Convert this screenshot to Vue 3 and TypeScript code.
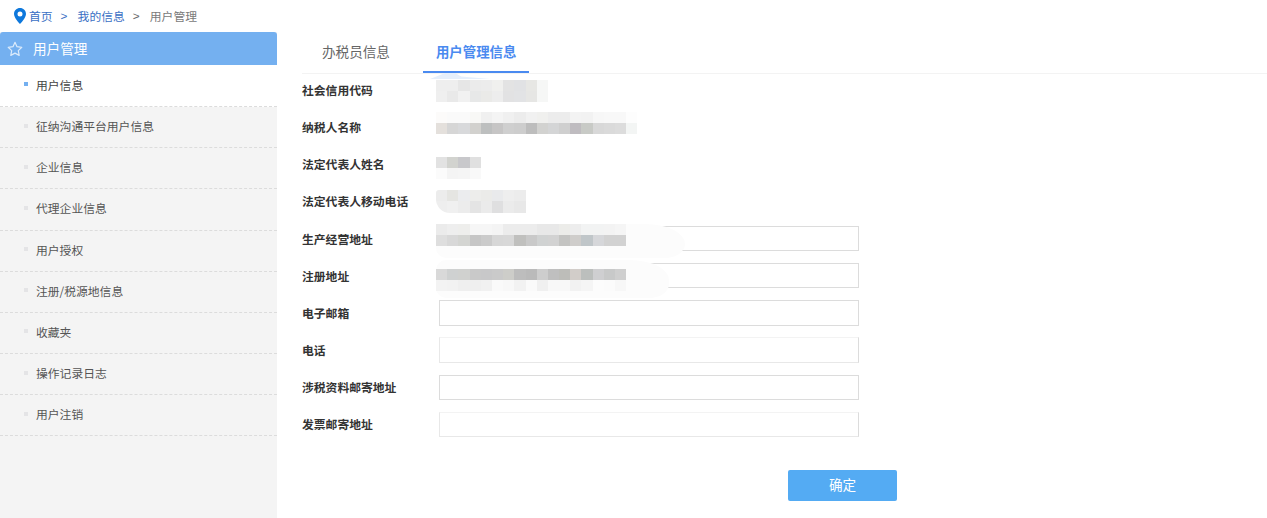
<script setup lang="ts">
interface Mosaic {
  top: number
  width: number
  height: number
  rows: string[][]
  rounded?: boolean
}
interface Field {
  label: string
  input: boolean
  soft?: boolean
  haze?: { top: number; width: number; height: number }
  mosaic?: Mosaic
}

const menu: string[] = [
  '用户信息',
  '征纳沟通平台用户信息',
  '企业信息',
  '代理企业信息',
  '用户授权',
  '注册/税源地信息',
  '收藏夹',
  '操作记录日志',
  '用户注销',
]

const g = (s: string): string[] => s.split(' ').map((c) => '#' + c)

const fields: Field[] = [
  {
    label: '社会信用代码',
    input: false,
    mosaic: {
      top: 2.5,
      width: 11.2,
      height: 11,
      rows: [
        g('eeeeee eeeeee e6e6e6 ebebeb ececec f0f0ee e3e3e3 e1e2e4 e7e7e4 f6f7f6'),
        g('efefef e9e9e9 f1f1f1 e7e8e8 eaeae8 ededed e2e2e3 e2e3e5 e6e6e4 f6f7f6'),
      ],
    },
  },
  {
    label: '纳税人名称',
    input: false,
    mosaic: {
      top: -2.2,
      width: 11.2,
      height: 11,
      rows: [
        g('fcfbfa fafafa fafafa f8f8f6 f0f0f0 f4f4f4 f0f0f0 ececec f1f1f1 f0f0ee ececec ececec f3f3f3 f2f2f2 f7f7f7 f8f8f8 f8f8f8 fdfdfd'),
        g('e4e0dc d6d6d6 d8d9db d2d1ce bdbfbf c6c5c5 cfcfcf cdcdcd bdbdbd d2d2d0 d4d5d6 cfcfcf bfbcc0 c8cac6 d8d8d8 dadada dcdcdc f3f5f4'),
      ],
    },
  },
  {
    label: '法定代表人姓名',
    input: false,
    mosaic: {
      top: 5.6,
      width: 11.2,
      height: 11,
      rows: [
        g('e2e2e2 d2d3cf c8c8cb e0e0e0'),
        g('fbfbfb f4f4f4 f5f5f5 f9f9f9'),
      ],
    },
  },
  {
    label: '法定代表人移动电话',
    input: false,
    mosaic: {
      top: 1.4,
      width: 11.2,
      height: 11.5,
      rounded: true,
      rows: [
        g('ececec e5e5e2 ebecee ededeb ebebe9 e9eaec eeeeee ececec'),
        g('eeeeee f0f0f0 ececec e4e4e4 ebebeb dfdfe0 ebebeb e8e8e8'),
      ],
    },
  },
  {
    label: '生产经营地址',
    input: true,
    haze: { top: -2, width: 249, height: 34 },
    mosaic: {
      top: -1.8,
      width: 11.2,
      height: 11,
      rows: [
        g('ebebeb eeeeee eeeeec f6f6f6 f6f6f6 f4f4f4 ececec ececec ececec e8e8e8 e8e8e8 ecece9 ededed f2f3f3 f2f3f3 f3f3f3 f5f5f5'),
        g('dedede d8d8d8 d4d5d2 c6c6c6 cbcbcb d7d7d7 d8d8d8 c0c0be c9c9c9 d0d2d2 d2d2d2 c4c4c2 cfcdcb c0c6c9 d6d7da d2d2d2 d2d2d2'),
      ],
    },
  },
  {
    label: '注册地址',
    input: true,
    haze: { top: -3, width: 233, height: 38 },
    mosaic: {
      top: 6,
      width: 11.2,
      height: 11,
      rows: [
        g('d9d9d9 cfd1d1 d0d1cf c9c9c9 c8c8c9 cacaca cdcdc9 bdbdbd bababa cdcdcd bfbfbf bdbdb9 d2cdc9 bcbfbd cfcfd1 c8c9c9 cfcfcf'),
        g('f3f3f3 f2f2f2 efefef efefef f1f1f1 fafafa f8f8f8 f2f2f2 fafafa f0f0f0 f8f8f8 f8f8f8 f2f2f2 f5f5f5 fcfcfc fbfbfb f7f7f7'),
      ],
    },
  },
  { label: '电子邮箱', input: true },
  { label: '电话', input: true, soft: true },
  { label: '涉税资料邮寄地址', input: true },
  { label: '发票邮寄地址', input: true, soft: true },
]
</script>

<template>
  <div class="page">
    <nav class="crumbs">
      <svg class="pin" viewBox="0 0 12 16" width="12" height="16" aria-hidden="true">
        <path
          fill="#0e78dc"
          fill-rule="evenodd"
          d="M6 0C2.7 0 0 2.6 0 5.9 0 10 6 16 6 16s6-6 6-10.100C12 2.600 9.300 0 6 0zm0 3.500a2.500 2.500 0 1 1 0 5 2.500 2.500 0 0 1 0-5z"
        />
      </svg>
      <a class="link first">首页</a>
      <span class="sep blue">&gt;</span>
      <a class="link">我的信息</a>
      <span class="sep">&gt;</span>
      <span class="here">用户管理</span>
    </nav>

    <div class="body">
      <aside class="side">
        <div class="side-head">
          <svg class="star" viewBox="0 0 16 16" width="16" height="16" aria-hidden="true">
            <path
              fill="none"
              stroke="#dcebfb"
              stroke-width="1.200"
              stroke-linejoin="round"
              d="M8 1.300l2 4.400 4.800.6-3.500 3.300.9 4.800L8 12.100l-4.200 2.300.9-4.800L1.200 6.300 6 5.700z"
            />
          </svg>
          <span>用户管理</span>
        </div>
        <ul class="menu">
          <li v-for="(item, i) in menu" :key="item" class="item" :class="{ active: i === 0 }">
            <i class="dot"></i>{{ item }}
          </li>
        </ul>
      </aside>

      <main class="main">
        <div class="tabs">
          <div class="tab">办税员信息</div>
          <div class="tab on">用户管理信息</div>
          <i class="hump"></i>
        </div>

        <form class="form" @submit.prevent>
          <div v-for="f in fields" :key="f.label" class="row">
            <label class="label">{{ f.label }}</label>
            <div class="value">
              <input v-if="f.input" class="input" :class="{ soft: f.soft }" type="text" />
              <div
                v-if="f.haze"
                class="haze"
                :style="{ top: f.haze.top + 'px', width: f.haze.width + 'px', height: f.haze.height + 'px' }"
              ></div>
              <div
                v-if="f.mosaic"
                class="mosaic"
                :class="{ rounded: f.mosaic.rounded }"
                :style="{ top: f.mosaic.top + 'px' }"
              >
                <div v-for="(r, ri) in f.mosaic.rows" :key="ri" class="m-row">
                  <span
                    v-for="(c, ci) in r"
                    :key="ci"
                    :style="{ background: c, width: f.mosaic.width + 'px', height: f.mosaic.height + 'px' }"
                  ></span>
                </div>
              </div>
            </div>
          </div>
          <button class="ok" type="submit">确定</button>
        </form>
      </main>
    </div>
  </div>
</template>

<style>
html,
body {
  margin: 0;
  background: #fff;
}
</style>

<style scoped>
.page {
  width: 1267px;
  height: 518px;
  overflow: hidden;
  display: flex;
  flex-direction: column;
  font-family: "Noto Sans CJK SC", "Liberation Sans", sans-serif;
  font-size: 11.800px;
  color: #333;
  background: #fff;
}
.crumbs {
  height: 32px;
  flex: none;
  display: flex;
  align-items: center;
  padding: 0 0 1px 14px;
  box-sizing: border-box;
}
.pin {
  flex: none;
  margin: 1px 3px 0 0;
}
.link {
  color: #3a6fc4;
}
.sep {
  width: 8px;
  margin: 0 9px 0 8px;
  color: #666;
  font-family: "Liberation Sans", sans-serif;
}
.sep.blue {
  color: #3a6fc4;
  margin: 0 9px 0 8px;
}
.here {
  color: #7a7a7a;
}
.body {
  flex: 1;
  display: flex;
  min-height: 0;
}
.side {
  width: 277px;
  flex: none;
  background: #f4f4f4;
}
.side-head {
  height: 33px;
  display: flex;
  align-items: center;
  background: #74b0f0;
  border-radius: 3px 3px 0 0;
  color: #fff;
  font-size: 13.600px;
  padding: 0 0 2px 7px;
  box-sizing: border-box;
}
.star {
  margin: 2px 10px 0 0;
}
.menu {
  list-style: none;
  margin: 0;
  padding: 1px 0 0;
}
.active:first-child {
  margin-top: -1px;
  padding-top: 1px;
}
.item {
  height: 41.150px;
  box-sizing: border-box;
  display: flex;
  align-items: center;
  padding: 0 0 3px 24px;
  border-bottom: 1px dashed #dcdcdc;
  color: #555;
}
.item.active {
  height: 42.150px;
  padding-bottom: 4px;
  background: #fff;
  color: #444;
}
.dot {
  width: 4px;
  height: 4px;
  margin-right: 8px;
  background: #e4e4e6;
}
.active .dot {
  background: #74b0f0;
}
.main {
  flex: 1;
  min-width: 0;
  padding-left: 25px;
}
.tabs {
  position: relative;
  height: 42px;
  box-sizing: border-box;
  display: flex;
  border-bottom: 1px solid #f3f3f3;
}
.tab {
  height: 41px;
  line-height: 38px;
  padding: 0 20px;
  font-size: 13.600px;
  color: #666;
  box-sizing: border-box;
}
.tab.on {
  width: 106px;
  margin-left: 13px;
  padding: 0 0 0 13px;
  font-size: 13.400px;
  color: #4a8af0;
  font-weight: 700;
  white-space: nowrap;
  border-bottom: 2px solid #4a8af0;
}
.hump {
  position: absolute;
  left: 128px;
  top: 41px;
  width: 60px;
  height: 6px;
  z-index: 2;
  background: #e6effb;
  clip-path: polygon(0 100%, 25% 0, 42% 0, 52% 60%, 100% 100%);
}
.form {
  padding-top: 3px;
  display: flex;
  flex-direction: column;
  gap: 11.700px;
}
.row {
  height: 25.500px;
  display: flex;
  align-items: center;
}
.label {
  width: 134px;
  flex: none;
  padding-bottom: 1px;
  font-weight: 700;
  color: #333;
  white-space: nowrap;
}
.value {
  position: relative;
  flex: 1;
  height: 100%;
}
.input {
  display: block;
  width: 420px;
  height: 25.500px;
  margin-left: 3px;
  padding: 0;
  box-sizing: border-box;
  border: 1px solid #dcdcdc;
  background: #fff;
  outline: none;
}
.input.soft {
  border-top-color: #f3f3f3;
  border-left-color: #e8e8e8;
  border-bottom-color: #e8e8e8;
}
.haze {
  position: absolute;
  left: 0;
  background: #fcfcfc;
  border-radius: 10px 40px 20px 10px / 10px 20px 14px 10px;
}
.mosaic {
  position: absolute;
  left: 0;
}
.mosaic.rounded {
  overflow: hidden;
  border-bottom-left-radius: 14px;
  border-top-left-radius: 3px;
}
.m-row {
  display: flex;
}
.m-row span {
  display: block;
  flex: none;
}
.ok {
  align-self: flex-start;
  width: 109px;
  height: 31px;
  margin: 20.800px 0 0 486px;
  border: 0;
  border-radius: 2px;
  background: #54abf3;
  color: #fff;
  font: inherit;
  font-size: 13.600px;
  padding: 0 0 2px;
}
</style>
